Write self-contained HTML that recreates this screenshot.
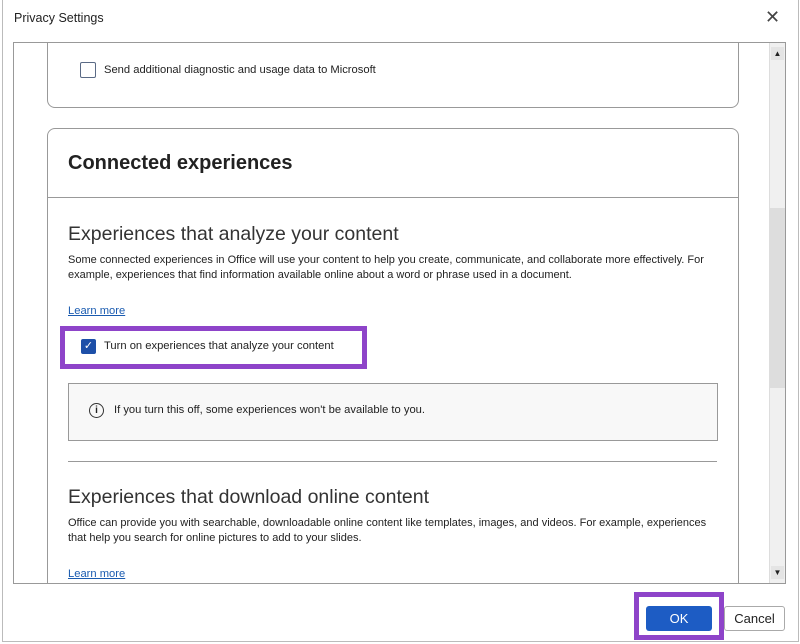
<!DOCTYPE html><html><head><style>
html,body{margin:0;width:800px;height:644px;overflow:hidden}
body{background:#fff;font-family:"Liberation Sans",sans-serif;color:#222;position:relative}
.a{position:absolute}
.t{font-size:11.2px;white-space:nowrap}
</style></head><body>
<div class="a" style="left:2px;top:0;width:795px;height:641px;border:1px solid #bbb;border-top:none"></div>
<div class="a t" style="left:14px;top:11px;font-size:12.5px">Privacy Settings</div>
<div class="a" style="left:765px;top:7px;font-size:18px;color:#444;font-weight:normal">✕</div>
<div class="a" style="left:13px;top:42px;width:771px;height:540px;border:1px solid #999;overflow:hidden;background:#fff">
 <div class="a" style="left:33px;top:-20px;width:690px;height:83px;border:1px solid #999;border-radius:8px"></div>
 <div class="a" style="left:66px;top:19px;width:14px;height:14px;border:1.5px solid #5a6a85;border-radius:2px"></div>
 <div class="a t" style="left:90px;top:21px">Send additional diagnostic and usage data to Microsoft</div>
 <div class="a" style="left:33px;top:85px;width:690px;height:600px;border:1px solid #999;border-radius:8px"></div>
 <div class="a" style="left:34px;top:154px;width:690px;height:1px;background:#999"></div>
 <div class="a" style="left:54px;top:109px;font-size:20px;font-weight:bold;color:#222">Connected experiences</div>
 <div class="a" style="left:54px;top:180px;font-size:19.5px;color:#333">Experiences that analyze your content</div>
 <div class="a t" style="left:54px;top:210px;line-height:15px;font-size:11px">Some connected experiences in Office will use your content to help you create, communicate, and collaborate more effectively. For<br>example, experiences that find information available online about a word or phrase used in a document.</div>
 <div class="a t" style="left:54px;top:262px;color:#1a5bb0;text-decoration:underline">Learn more</div>
 <div class="a" style="left:46px;top:283px;width:297px;height:33px;border:5px solid #8e44c9"></div>
 <div class="a" style="left:67px;top:296px;width:15px;height:15px;background:#1d4fa8;border-radius:2px;color:#fff;font-size:11px;text-align:center;line-height:15px">✓</div>
 <div class="a t" style="left:90px;top:297px">Turn on experiences that analyze your content</div>
 <div class="a" style="left:54px;top:340px;width:648px;height:56px;border:1px solid #999;background:#f8f8f8"></div>
 <div class="a" style="left:75px;top:360px;width:13px;height:13px;border:1.3px solid #333;border-radius:50%;font-size:10px;text-align:center;line-height:13px;font-weight:bold">i</div>
 <div class="a t" style="left:100px;top:361px">If you turn this off, some experiences won't be available to you.</div>
 <div class="a" style="left:54px;top:418px;width:649px;height:1px;background:#999"></div>
 <div class="a" style="left:54px;top:443px;font-size:19.5px;color:#333">Experiences that download online content</div>
 <div class="a t" style="left:54px;top:473px;line-height:15px;font-size:11px">Office can provide you with searchable, downloadable online content like templates, images, and videos. For example, experiences<br>that help you search for online pictures to add to your slides.</div>
 <div class="a t" style="left:54px;top:525px;color:#1a5bb0;text-decoration:underline">Learn more</div>
 <div class="a" style="left:755px;top:0;width:16px;height:540px;background:#f0f0f0;border-left:1px solid #ddd"></div>
 <div class="a" style="left:756px;top:165px;width:15px;height:180px;background:#ddd"></div>
 <div class="a" style="left:757px;top:4px;width:13px;height:13px;background:#e4e4e4;font-size:8px;text-align:center;line-height:13px">▲</div>
 <div class="a" style="left:757px;top:523px;width:13px;height:13px;background:#e4e4e4;font-size:8px;text-align:center;line-height:13px">▼</div>
</div>
<div class="a" style="left:634px;top:592px;width:80px;height:38px;border:5px solid #8e44c9"></div>
<div class="a" style="left:646px;top:606px;width:66px;height:25px;background:#1d5cc4;border-radius:3px;color:#fff;font-size:13px;text-align:center;line-height:25px">OK</div>
<div class="a" style="left:724px;top:606px;width:59px;height:23px;border:1px solid #aaa;border-radius:3px;font-size:13px;text-align:center;line-height:23px">Cancel</div>
</body></html>
